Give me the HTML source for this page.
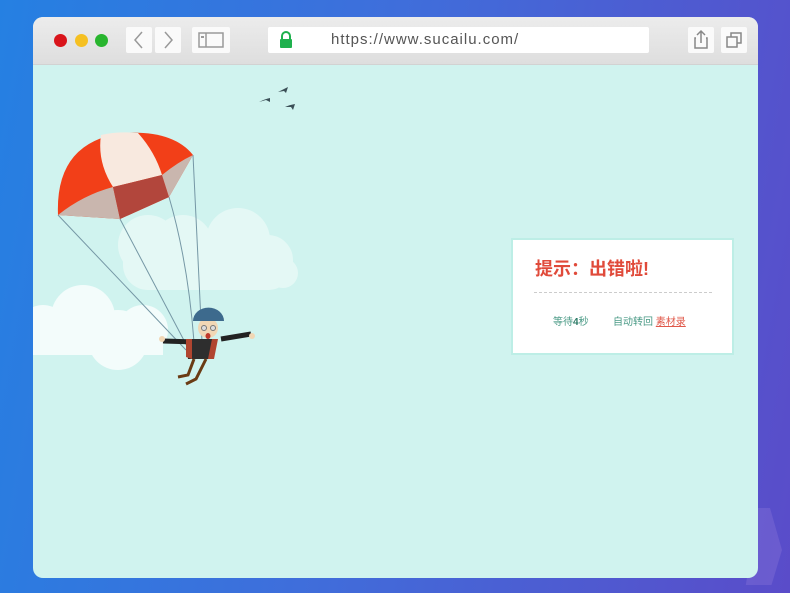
<!DOCTYPE html>
<html><head><meta charset="utf-8"><style>
*{margin:0;padding:0;box-sizing:border-box}
body{width:790px;height:593px;overflow:hidden;background:linear-gradient(100deg,#2580e2 0%,#3f6edb 45%,#5a4cc9 100%);position:relative;font-family:"Liberation Sans","Noto Sans CJK SC",sans-serif}
.win{position:absolute;left:33px;top:17px;width:725px;height:561px;border-radius:10px;overflow:hidden;background:#d0f3ef}
.bar{position:absolute;left:0;top:0;width:100%;height:48px;background:linear-gradient(#ececec,#dedede);border-bottom:1px solid #d2d2d2}
.dot{position:absolute;top:17px;width:13px;height:13px;border-radius:50%}
.btn{position:absolute;top:10px;height:26px;background:#fafafa;border-radius:2px}
.url{position:absolute;left:235px;top:10px;width:381px;height:26px;background:#fff;border-radius:2px;font-size:15px;color:#555;letter-spacing:1px;line-height:26px;padding-left:63px}
.card{position:absolute;left:478px;top:221px;width:223px;height:117px;background:#fff;border:2px solid #bdeee6}
.t{position:absolute;left:22px;top:15px;font-size:18px;font-weight:bold;color:#e04a3a}
.hr{position:absolute;left:21px;top:52px;width:178px;border-top:1px dashed #ccc}
.s{position:absolute;top:73px;font-size:10px;color:#4a9a86}
</style></head><body>
<svg style="position:absolute;left:740px;top:505px" width="45" height="80"><polygon points="18,3 30,3 42,45 30,85 5,85 18,3" fill="#8b78da" opacity=".35"/></svg>
<div class="win">
<div class="bar">
<div class="dot" style="left:21px;background:#d9141b"></div>
<div class="dot" style="left:42px;background:#f5c022"></div>
<div class="dot" style="left:62px;background:#28b52e"></div>
<div class="btn" style="left:93px;width:26px"><svg width="26" height="26"><path d="M16 5 L9 13 L16 21" stroke="#999" stroke-width="1.5" fill="none"/></svg></div>
<div class="btn" style="left:122px;width:26px"><svg width="26" height="26"><path d="M10 5 L17 13 L10 21" stroke="#999" stroke-width="1.5" fill="none"/></svg></div>
<div class="btn" style="left:159px;width:38px"><svg width="38" height="26"><rect x="7" y="6" width="24" height="14" stroke="#999" stroke-width="1.5" fill="none"/><line x1="14" y1="6" x2="14" y2="20" stroke="#999" stroke-width="1.5"/><rect x="9" y="9" width="3" height="2" fill="#999"/></svg></div>
<div class="url"><svg style="position:absolute;left:10px;top:4px" width="16" height="18"><path d="M4 8 V5 a4 4 0 0 1 8 0 V8" stroke="#1fb14e" stroke-width="2" fill="none"/><rect x="2" y="8" width="12" height="9" rx="1" fill="#1fb14e"/></svg>https://www.sucailu.com/</div>
<div class="btn" style="left:655px;width:26px"><svg width="26" height="26"><path d="M8 11 H7 V21 H19 V11 H18 M13 16 V4 M9 8 L13 4 L17 8" stroke="#888" stroke-width="1.5" fill="none"/></svg></div>
<div class="btn" style="left:688px;width:26px"><svg width="26" height="26"><rect x="6" y="10" width="10" height="10" stroke="#888" stroke-width="1.5" fill="none"/><path d="M10 10 V6 H20 V16 H16" stroke="#888" stroke-width="1.5" fill="none"/></svg></div>
</div>
<svg style="position:absolute;left:0;top:48px" width="300" height="340">
<g fill="#e4f8f5"><circle cx="115" cy="180" r="30"/><circle cx="150" cy="180" r="30"/><circle cx="205" cy="175" r="32"/><circle cx="240" cy="200" r="20"/><circle cx="250" cy="208" r="15"/><rect x="90" y="170" width="170" height="55" rx="25"/></g>
<g fill="#f3fcfb"><circle cx="10" cy="265" r="25"/><circle cx="50" cy="252" r="32"/><circle cx="85" cy="275" r="30"/><circle cx="110" cy="265" r="25"/><rect x="0" y="250" width="130" height="40"/></g>
</svg>
<svg style="position:absolute;left:0;top:65px" width="300" height="340">
<g stroke="#7597a5" stroke-width="1" fill="none"><path d="M25 133 L153 268"/><path d="M87 137 L155 266"/><path d="M136 115 Q155 180 161 260"/><path d="M160 73 L169 260"/></g>
<path d="M25 133 Q22 60 90 51 Q140 48 160 73 L136 115 L87 137 L25 133Z" fill="#f23f18"/>
<path d="M68 53 Q85 49 105 51 Q122 70 129 93 L80 105 Q64 80 68 53Z" fill="#f8e9df"/>
<path d="M25 133 Q50 113 80 105 L87 137Z" fill="#c9b6ae"/>
<path d="M80 105 L129 93 L136 115 L87 137Z" fill="#b2463c"/>
<path d="M129 93 Q145 80 160 73 L136 115Z" fill="#c9b6ae"/>
<g transform="translate(3,-33)">
<path d="M127 292 L160 293 M185 290 L215 285" stroke="#222" stroke-width="5"/>
<circle cx="126" cy="290" r="3" fill="#f1d7b5"/><circle cx="216" cy="287" r="3" fill="#f1d7b5"/>
<path d="M150 290 L180 290 L174 310 L152 310Z" fill="#2e2e2e"/>
<path d="M150 290 L156 290 L156 310 L150 308Z M176 290 L182 290 L178 310 L172 310Z" fill="#b04530"/>
<path d="M158 310 L152 326 L142 328 M170 310 L160 330 L150 335" stroke="#6a3b14" stroke-width="3" fill="none"/>
<circle cx="172" cy="279" r="10" fill="#f1d7b5"/>
<path d="M157 272 a15 13 0 0 1 31 0Z" fill="#3d6a8d"/>
<circle cx="168" cy="279" r="2.5" fill="#ddd" stroke="#777"/><circle cx="177" cy="279" r="2.5" fill="#ddd" stroke="#777"/>
<ellipse cx="172" cy="287" rx="2.5" ry="3" fill="#c0392b"/>
</g>
</svg>
<svg style="position:absolute;left:225px;top:66px" width="45" height="35" fill="#3b4f57"><path d="M1 19 Q7 16 12 15 L12 19 L8 17Z"/><path d="M20 9 Q26 6 30 4 L28 10 L26 8Z"/><path d="M27 24 Q31 22 37 21 L35 27 L33 24Z"/></svg>
<div class="card">
<div class="t">提示：出错啦!</div>
<div class="hr"></div>
<div class="s" style="left:40px">等待<b style="color:#2c7a66">4</b>秒</div>
<div class="s" style="left:100px">自动转回 <span style="color:#e0584a;text-decoration:underline">素材录</span></div>
</div>
</div>
</body></html>
